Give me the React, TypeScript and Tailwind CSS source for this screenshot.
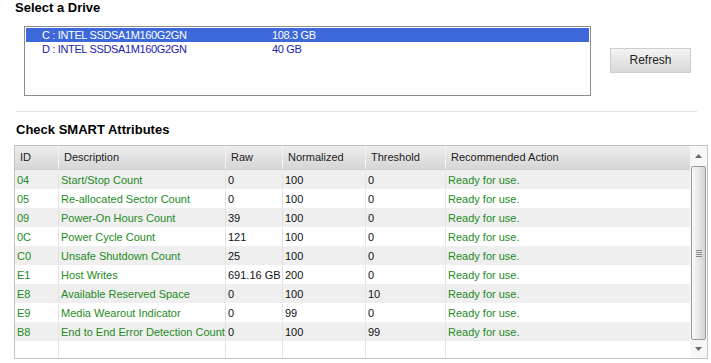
import React from "react";

const rows = [
  ["04", "Start/Stop Count", "0", "100", "0"],
  ["05", "Re-allocated Sector Count", "0", "100", "0"],
  ["09", "Power-On Hours Count", "39", "100", "0"],
  ["0C", "Power Cycle Count", "121", "100", "0"],
  ["C0", "Unsafe Shutdown Count", "25", "100", "0"],
  ["E1", "Host Writes", "691.16 GB", "200", "0"],
  ["E8", "Available Reserved Space", "0", "100", "10"],
  ["E9", "Media Wearout Indicator", "0", "99", "0"],
  ["B8", "End to End Error Detection Count", "0", "100", "99"],
];

const cols = "grid grid-cols-[44px_167px_57px_83px_80px_1fr]";

export default function App() {
  return (
    <div className="w-[711px] h-[363px] bg-white overflow-hidden font-['Liberation_Sans',Arial,sans-serif] text-[11px] text-[#111]">
      <div className="pl-[15px] text-[13px] font-bold leading-[16px] text-black">Select a Drive</div>

      <div className="flex items-start mt-[10px]">
        <div className="ml-[24px] w-[567px] h-[70px] border border-[#8c8c8c] p-[1px] tracking-[-0.35px]">
          <div className="flex h-[14px] leading-[14px] bg-[#3d68d9] text-white">
            <span className="pl-[16px] w-[246px]">C : INTEL SSDSA1M160G2GN</span>
            <span>108.3 GB</span>
          </div>
          <div className="flex h-[14px] leading-[14px] text-[#2222b0]">
            <span className="pl-[16px] w-[246px]">D : INTEL SSDSA1M160G2GN</span>
            <span>40 GB</span>
          </div>
        </div>
        <button className="ml-[19px] mt-[22px] w-[81px] h-[25px] border border-[#cdcdcd] bg-gradient-to-b from-[#f4f4f4] to-[#d9d9d9] text-[12px] text-[#222] leading-[23px]">
          Refresh
        </button>
      </div>

      <div className="ml-[16px] mt-[15px] w-[681px] h-px bg-[#e2e2e2]" />

      <div className="pl-[16px] mt-[10px] text-[13px] font-bold leading-[16px] text-black">Check SMART Attributes</div>

      <div className="ml-[14px] mt-[7px] w-[694px] h-[214px] border border-[#c4c4c4] flex">
        <div className="flex-1 flex flex-col">
          <div className={`${cols} h-[24px] bg-gradient-to-b from-[#eeeeee] to-[#d6d6d6] border-b border-[#cfcfcf] text-[#222] leading-[23px]`}>
            {["ID", "Description", "Raw", "Normalized", "Threshold", "Recommended Action"].map((h, i) => (
              <div key={h} className={`pl-[5px] ${i < 5 ? "border-r border-[#f3f3f3]" : ""}`}>{h}</div>
            ))}
          </div>
          {rows.map((r, idx) => (
            <div key={r[0]} className={`${cols} h-[19px] pt-[1px] leading-[18px] ${idx % 2 === 0 ? "bg-[#efefef]" : "bg-white"}`}>
              <div className="pl-[2px] border-r border-[#e2e2e2] text-[#238b23]">{r[0]}</div>
              <div className="pl-[2px] border-r border-[#e2e2e2] text-[#238b23] whitespace-nowrap">{r[1]}</div>
              <div className="pl-[2px] border-r border-[#e2e2e2] whitespace-nowrap">{r[2]}</div>
              <div className="pl-[2px] border-r border-[#e2e2e2]">{r[3]}</div>
              <div className="pl-[2px] border-r border-[#e2e2e2]">{r[4]}</div>
              <div className="pl-[2px] text-[#238b23]">Ready for use.</div>
            </div>
          ))}
          <div className={`${cols} flex-1 bg-white`}>
            <div className="border-r border-[#e2e2e2]" />
            <div className="border-r border-[#e2e2e2]" />
            <div className="border-r border-[#e2e2e2]" />
            <div className="border-r border-[#e2e2e2]" />
            <div className="border-r border-[#e2e2e2]" />
            <div />
          </div>
        </div>

        <div className="w-[17px] bg-[#f7f7f7] flex flex-col">
          <div className="h-[20px] flex items-center justify-center">
            <svg width="7" height="4" viewBox="0 0 7 4"><path d="M0 4 L3.5 0 L7 4 Z" fill="#6a6a6a" /></svg>
          </div>
          <div className="flex-1 mx-[1px] rounded-[2px] border border-[#9a9a9a] bg-gradient-to-r from-[#fafafa] to-[#d4d4d4] flex items-center justify-center">
            <div className="flex flex-col gap-[1px]">
              <div className="w-[6px] h-px bg-[#8a8a8a]" />
              <div className="w-[6px] h-px bg-[#8a8a8a]" />
              <div className="w-[6px] h-px bg-[#8a8a8a]" />
              <div className="w-[6px] h-px bg-[#8a8a8a]" />
            </div>
          </div>
          <div className="h-[18px] flex items-center justify-center">
            <svg width="7" height="4" viewBox="0 0 7 4"><path d="M0 0 L3.5 4 L7 0 Z" fill="#6a6a6a" /></svg>
          </div>
        </div>
      </div>
    </div>
  );
}
